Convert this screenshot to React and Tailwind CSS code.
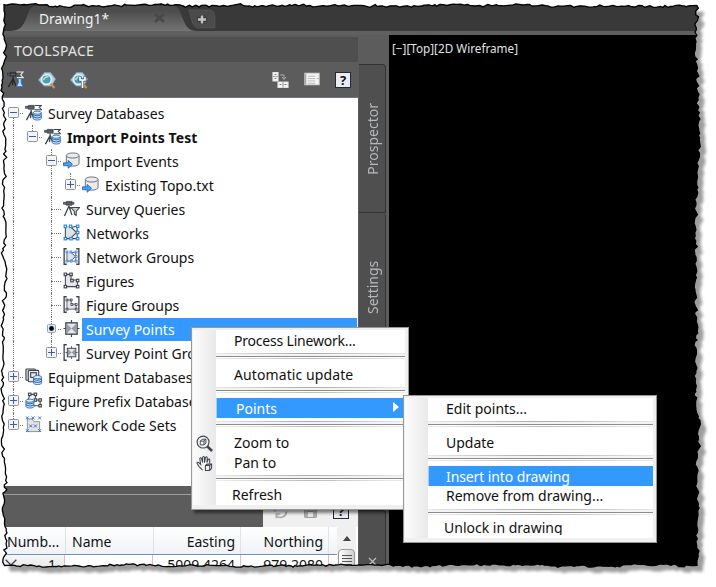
import clsx from 'clsx'

// Irregular torn outline around the whole window
function tornEdge(l, t, r, b) {
 let seed = 11
 const rand = () => {
  seed = (seed * 16807) % 2147483647
  return seed / 2147483647
 }
 const pts = []
 const side = (from, to, place) => {
  const dir = from < to ? 1 : -1
  let drift = 0
  for (let p = from; dir * (to - p) > 3; p += dir * (1.5 + rand() * 3)) {
   drift = Math.max(-1.8, Math.min(1.8, drift + (rand() - 0.5) * 2.4))
   pts.push(place(p, drift + (rand() - 0.5) * 3))
  }
 }
 side(l, r, (p, d) => [p, t + d * 0.6])
 side(t, b, (p, d) => [r + d, p])
 side(r, l, (p, d) => [p, b + d * 0.6])
 side(b, t, (p, d) => [l + d, p])
 return pts.map(([x, y]) => [x.toFixed(1), y.toFixed(1)])
}

const edge = tornEdge(4, 5.5, 697, 565.5)
const edgePoints = edge.map((p) => p.join(',')).join(' ')
const edgeClip = `polygon(${edge.map(([x, y]) => `${x}px ${y}px`).join(',')})`

const DARK = '#3f454f'
const BLUE = '#2f86e0'

function Svg({ children, className = 'w-[18px] h-[18px]', box = '0 0 18 18' }) {
 return (
  <svg viewBox={box} className={clsx('shrink-0', className)} fill="none" stroke={DARK} strokeWidth="1.2">
   {children}
  </svg>
 )
}

function Cylinder({ x, y, w, h, fill = '#e9ebee', stroke = '#666c76' }) {
 const r = w / 2
 const e = w / 5
 return (
  <g fill={fill} stroke={stroke} strokeWidth="1">
   <path d={`M${x} ${y + e}v${h - 2 * e}a${r} ${e} 0 0 0 ${w} 0v${-(h - 2 * e)}`} />
   <ellipse cx={x + r} cy={y + e} rx={r} ry={e} />
  </g>
 )
}

// Blue cylinder with white bands, the small database badge
function Database({ x, y, w = 8.5, h = 9.5 }) {
 return (
  <>
   <Cylinder x={x} y={y} w={w} h={h} fill="#e4f0fc" stroke="#2f6db8" />
   <path d={`M${x} ${y + 3.8}q${w / 2} 2.600 ${w} 0M${x} ${y + 6}q${w / 2} 2.600 ${w} 0`} stroke="#2f6db8" strokeWidth="1.100" />
  </>
 )
}

function Tripod() {
 return (
  <>
   <path d="M.5 2.500h9v2h-9zM3.500 1.500h6v4h-6z" fill="#6b7078" strokeWidth=".8" />
   <path d="M6.500 6v2.500M6.500 8 1.500 17M6.500 8l3 8M6.500 9l-.700 6" strokeWidth="1.400" />
  </>
 )
}

function Nodes({ points, color }) {
 return points.map(([x, y]) => (
  <rect key={`${x}-${y}`} x={x - 1.3} y={y - 1.3} width="2.6" height="2.6" fill="#fff" stroke={color} strokeWidth="1.200" />
 ))
}

function Network() {
 return (
  <>
   <path d="M2.500 2.500h5l7 6-7 7h-5z" fill="#dfe3e8" stroke="none" />
   <path d="M2.500 2.500v13h12.500v-13M8 3l6.500 6L8 15M9.500 3.500 15 2.500" strokeWidth="1.100" />
   <Nodes color={BLUE} points={[[2.5, 2.5], [8, 2.5], [15.5, 2.5], [15.5, 9], [15.5, 15.5], [8.5, 15.5], [2.5, 15.5]]} />
  </>
 )
}

function Figure({ color = DARK }) {
 return (
  <>
   <path d="M2.500 2.500h6v6h7v7h-13z" fill="#e4e6e9" strokeWidth="1.100" />
   <Nodes color={color} points={[[2.5, 2.5], [8.5, 2.5], [9.5, 9], [15.5, 9], [15.5, 15.5], [2.5, 15.5]]} />
  </>
 )
}

function Brackets({ children }) {
 return (
  <>
   <path d="M4 .8H1.200v16.400H4M14 .8h2.800v16.400H14" strokeWidth="1.400" />
   <g transform="translate(2.300 2.300) scale(.75)">{children}</g>
  </>
 )
}

function SurveyPoint() {
 return (
  <>
   <path d="M9 0v18M.5 9h17" strokeWidth="1.200" />
   <rect x="3" y="3" width="12" height="12" fill="#e4e6e9" strokeWidth="1.400" />
   <path d="M4 4l10 10V4L4 14z" fill="#979da5" stroke="none" />
  </>
 )
}

const icons = {
 survey: (
  <>
   <Tripod />
   <path d="M10 1.500h7.500l-2.500 2 2.500 2.500H10" strokeWidth="1.100" />
   <Database x={8.7} y={7.5} />
  </>
 ),
 event: (
  <>
   <Cylinder x={3.5} y={1} w={13.5} h={14} />
   <path d="M.5 11.500h5V9l4.500 4-4.500 4.200v-2.700h-5z" fill="#4da3ee" stroke="#1b62ad" strokeWidth=".9" />
  </>
 ),
 query: (
  <>
   <path d="M.5 2.500h11v2H.5zM3.500 1.500h6v4h-6z" fill="#6b7078" strokeWidth=".8" />
   <path d="M6.500 6 1.500 17M6.500 7l3 9M6.500 8.500h2" strokeWidth="1.400" />
   <path d="M8.500 8h9l-3.500 4v4.500l-2-1.500v-3z" fill="#c9ccd1" strokeWidth="1.100" />
  </>
 ),
 network: <Network />,
 networkGroup: <Brackets><Network /></Brackets>,
 figure: <Figure />,
 figureGroup: <Brackets><Figure /></Brackets>,
 point: <SurveyPoint />,
 pointGroup: <Brackets><SurveyPoint /></Brackets>,
 equipment: (
  <>
   <rect x="1" y="1" width="10" height="12" rx="1" fill="#dcdee2" />
   <rect x="3.500" y="2.500" width="11" height="12" rx="1" fill="#e9ebee" />
   <rect x="6" y="5" width="6" height="5" />
   <Database x={9} y={8} />
  </>
 ),
 prefix: (
  <>
   <path d="M4.500 2.500H11v6h5v6H9M5 3 3.500 8" strokeWidth="1.100" />
   <Nodes color={DARK} points={[[5, 2.5], [11, 2.5], [11, 8.5], [16, 8.5], [16, 14.5]]} />
   <Database x={1} y={7.5} />
  </>
 ),
 linework: (
  <>
   <path d="M2.500 3h5l2 3h6v10.500h-13z" fill="#dfe3e8" stroke="#8b9097" strokeWidth="1" />
   <path d="m1 .5 3 3m0-3-3 3M7 .5l3 3m0-3-3 3m7-3 3 3m0-3-3 3M4.500 9l3 3m0-3-3 3m5-3 3 3m0-3-3 3M1 14l3 3m0-3-3 3m13-3 3 3m0-3-3 3" stroke="#2a72bd" strokeWidth="1" />
  </>
 ),
}

// guides: columns on the left that carry a dotted line through the row
const tree = [
 { text: 'Survey Databases', level: 0, icon: 'survey', toggle: '-', down: true },
 { text: 'Import Points Test', level: 1, icon: 'survey', toggle: '-', up: true, guides: [0], bold: true },
 { text: 'Import Events', level: 2, icon: 'event', toggle: '-', up: true, down: true, guides: [0] },
 { text: 'Existing Topo.txt', level: 3, icon: 'event', toggle: '+', up: true, guides: [0, 2] },
 { text: 'Survey Queries', level: 2, icon: 'query', up: true, down: true, guides: [0] },
 { text: 'Networks', level: 2, icon: 'network', up: true, down: true, guides: [0] },
 { text: 'Network Groups', level: 2, icon: 'networkGroup', up: true, down: true, guides: [0] },
 { text: 'Figures', level: 2, icon: 'figure', up: true, down: true, guides: [0] },
 { text: 'Figure Groups', level: 2, icon: 'figureGroup', up: true, down: true, guides: [0] },
 { text: 'Survey Points', level: 2, icon: 'point', toggle: 'dot', up: true, down: true, guides: [0], selected: true },
 { text: 'Survey Point Groups', level: 2, icon: 'pointGroup', toggle: '+', up: true, guides: [0] },
 { text: 'Equipment Databases', level: 0, icon: 'equipment', toggle: '+', up: true, down: true },
 { text: 'Figure Prefix Databases', level: 0, icon: 'prefix', toggle: '+', up: true, down: true },
 { text: 'Linework Code Sets', level: 0, icon: 'linework', toggle: '+', up: true },
]

function Toggle({ kind }) {
 if (kind === 'dot') {
  return (
   <svg viewBox="0 0 9 9" className="w-[9px] h-[9px] shrink-0">
    <rect x=".5" y=".5" width="8" height="8" rx="1" fill="#e3edf6" stroke="#88a8c8" />
    <circle cx="4.500" cy="4.500" r="2.400" fill="#000" />
   </svg>
  )
 }
 return (
  <svg viewBox="0 0 11 11" className="w-[11px] h-[11px] shrink-0">
   <rect x=".5" y=".5" width="10" height="10" rx="1" fill="#f3f4f5" stroke="#929292" />
   <path d="M2 5.500h7" stroke="#3c5ba9" />
   {kind === '+' && <path d="M5.500 2v7" stroke="#3c5ba9" />}
  </svg>
 )
}

function TreeRow({ item }) {
 const line = 'w-px border-l border-dotted border-[#777]'
 return (
  <div className="flex h-6 items-center">
   {Array.from({ length: item.level }, (_, i) => (
    <div key={i} className="w-[19px] h-6 pl-[9px] shrink-0">
     {item.guides.includes(i) && <div className={clsx(line, 'h-6')} />}
    </div>
   ))}
   <div className="w-[19px] h-6 shrink-0 flex flex-col items-center -mt-px">
    <div className={clsx('w-px flex-1', item.up && line)} />
    {item.toggle && <Toggle kind={item.toggle} />}
    <div className={clsx('w-px flex-1', item.down && line)} />
   </div>
   <div className={clsx('h-px border-t border-dotted border-[#777] shrink-0', item.toggle ? 'w-[3px] -ml-[3px]' : 'w-[9px] -ml-[9px]')} />
   <Svg className="w-[17px] h-[17px] ml-[2px] -mt-px">{icons[item.icon]}</Svg>
   <div
    className={clsx(
     'ml-[2px] pl-1 h-[23px] leading-[23px] flex-1 mr-px mt-px',
     item.bold && 'font-bold tracking-[0.1px]',
     item.selected && 'bg-[#3399ff] text-white',
    )}
   >
    {item.text}
   </div>
  </div>
 )
}

function Separator({ className }) {
 return (
  <div className={clsx('ml-6 mr-[3px] shrink-0', className)}>
   <div className="h-px bg-gradient-to-r from-[#e8e8e8] via-[#aaa] to-[#e8e8e8]" />
   <div className="h-[2px] bg-[#f4f4f4]" />
   <div className="h-px bg-[#8c8c8c]" />
   <div className="h-px" />
   <div className="h-px bg-gradient-to-r from-[#eee] via-[#bbb] to-[#eee]" />
  </div>
 )
}

function MenuItem({ text, icon, active, arrow, indent = 'pl-[18px]', className }) {
 return (
  <div className="flex h-5 shrink-0 leading-5">
   <div className="w-6 flex items-center justify-center shrink-0">{icon}</div>
   <div
    className={clsx(
     'flex-1 flex items-center justify-between mr-[3px]',
     indent,
     active && 'bg-[#3399ff] text-white border-l border-[#9fcfff]',
     className,
    )}
   >
    <span>{text}</span>
    {arrow && (
     <svg viewBox="0 0 6 10" className="w-[6px] h-[10px] mr-[6px] mb-1">
      <path d="M0 0l6 5-6 5z" fill="#fff" />
     </svg>
    )}
   </div>
  </div>
 )
}

function Menu({ className, children }) {
 return (
  <div className={clsx('absolute flex flex-col border border-[#979797] bg-[#f0f0f0] text-[#111]', className)}>
   <div className="flex-1 flex flex-col ml-px mt-px mb-1 mr-[3px] bg-[linear-gradient(90deg,#fcfcfc_0,#e9e9e9_23px,#fff_23px)]">
    <div className="flex flex-col flex-1 -ml-px -mr-[3px]">{children}</div>
   </div>
  </div>
 )
}

function HelpIcon() {
 return <div className="size-4 border border-[#222a3a] bg-[#e9edf2] text-[#111] text-[13px] leading-[14px] font-bold text-center">?</div>
}

function TabStrip() {
 return (
  <div className="h-[31px] shrink-0 bg-[#393939] flex">
   <svg viewBox="0 0 220 31" className="w-[220px] h-[31px]">
    <defs>
     <linearGradient id="tab" x1="0" y1="0" x2="0" y2="1">
      <stop offset="0.200" stopColor="#4c4c4c" />
      <stop offset="1" stopColor="#747474" />
     </linearGradient>
    </defs>
    <path d="M10 31c10 0 13-5 16-12 3-8 4-13 10-13h137c6 0 7 6 10 13 3 8 6 12 14 12z" fill="url(#tab)" />
    <path d="M189 10h20q5 0 6 6v12h-17c-5 0-7-9-9-18z" fill="#4b4b4b" stroke="#5c5c5c" strokeWidth=".6" />
    <path d="M202 15v9M197.500 19.500h9" stroke="#333" strokeWidth="4.500" />
    <path d="M202 15.500v8M198 19.500h8" stroke="#c4c4c4" strokeWidth="2.500" />
    <path d="m155 14 9 8m0-8-9 8" stroke="#484848" strokeWidth="2.500" />
    <text x="39" y="24" fill="#f2f2f2" fontSize="14.500" textLength="70" lengthAdjust="spacingAndGlyphs">Drawing1*</text>
   </svg>
  </div>
 )
}

function Toolbar() {
 return (
  <div className="h-9 flex items-center justify-between pl-[7px] pr-[7px] border-b border-[#737380]">
   <div className="flex gap-[14px]">
    <Svg className="w-[17px] h-[17px]">
     <g stroke="#24282e"><Tripod /></g>
     <path d="M10 1h7l-2.500 3L17 7h-6.500" stroke="#e4e4e4" fill="#555" />
     <path d="M12 8h3v4.500l2 4h-7l2-4z" fill="#b8dcfc" stroke="#3279c4" strokeWidth="1" />
    </Svg>
    {[false, true].map((wrench, i) => (
     <Svg key={i} className="w-[18px] h-[18px]">
      <path d="m.5 9 6-7.500h6l5 6.500-4 7H6z" fill="#b9cfe6" stroke="#7f9dbb" strokeWidth=".8" />
      <circle cx="8.500" cy="8.500" r="4.800" fill="#4b9fa8" stroke="#e6f2ff" strokeWidth="1.400" />
      <path d="M5.500 9q2-4 5-3" stroke="#a8ecc0" strokeWidth="1.600" />
      <path d="m12.500 12.500 4 4.500" stroke="#d4914d" strokeWidth="2" />
      {wrench && (
       <>
        <path d="M10 5.500v3.500h5V5.500M12.500 9v8" stroke="#40597a" strokeWidth="3.200" />
        <path d="M10 6v3h5V6M12.500 9v8" stroke="#fff" strokeWidth="1.700" />
       </>
      )}
     </Svg>
    ))}
   </div>
   <div className="flex items-center gap-[14px]">
    <Svg>
     <path d="M2 1.500h5v8.500H2z" fill="#fafafa" stroke="#e2e2e2" />
     <path d="M7 11h10v5.500H7zM12 11v5.500" fill="#fafafa" stroke="#e2e2e2" />
     <path d="M2 5.500h5M12 11v5.500" stroke="#888" strokeWidth=".8" />
     <path d="M3.500 3.500h2M3.500 7.500h2M8.500 13.500h2M13.500 13.500h2" stroke="#777" strokeWidth="1" />
     <path d="M9 4h4v4m-2-2 2 2.500L15 6" stroke="#aaa" strokeWidth="1" />
    </Svg>
    <Svg className="w-[18px] h-[17px]">
     <path d="M1.500 2.500h15v12h-15z" fill="#f4f4f4" stroke="#d5d5d5" />
     <path d="M4.500 5.500h8M4.500 8h8M4.500 10.500h8M4.500 13h8M14 8h3" stroke="#aaa" strokeWidth=".8" />
     <path d="M2 3v11" stroke="#aaa" strokeWidth="2" />
    </Svg>
    <HelpIcon />
   </div>
  </div>
 )
}

function PointTable() {
 const head = 'shrink-0 border-r border-[#dde3ea]'
 const cell = 'shrink-0 border-r border-[#f5b5b5]'
 return (
  <div className="flex h-[50px] bg-white text-[#111]">
   <div className="w-[337px] shrink-0">
    <div className="flex h-[28px] leading-[30px] border-b border-[#6f93b5] bg-gradient-to-b from-white to-[#eff2f6]">
     <div className={clsx(head, 'w-[66px] pl-[7px]')}>Numb...</div>
     <div className={clsx(head, 'w-[88px] pl-[6px]')}>Name</div>
     <div className={clsx(head, 'w-[87px] pr-[5px] text-right')}>Easting</div>
     <div className={clsx(head, 'w-[88px] pr-[5px] text-right')}>Northing</div>
    </div>
    <div className="flex h-[22px] leading-[20px]">
     <div className={clsx(cell, 'w-[65px] flex justify-between pl-[5px] pr-2 bg-gradient-to-b from-[#f7f7f7] to-[#ddd]')}>
      <Svg className="w-[12px] h-[12px] mt-1"><path d="m1 1 16 16M17 1 1 17" strokeWidth="2" /></Svg>
      <span>1</span>
     </div>
     <div className={clsx(cell, 'w-[88px]')} />
     <div className={clsx(cell, 'w-[88px] pr-[5px] text-right')}>5009.4264</div>
     <div className={clsx(cell, 'w-[88px] pr-[5px] text-right')}>979.2080</div>
    </div>
   </div>
   <div className="w-[19px] bg-[#f0f0f0] flex flex-col items-center">
    <svg viewBox="0 0 18 22" className="w-[18px] h-[22px]"><path d="m5 14 4-5 4 5z" fill="#444" /></svg>
    <div className="w-[17px] h-7 rounded-sm border border-[#999] bg-gradient-to-r from-white to-[#d0d0d0] flex flex-col items-center gap-[2px] pt-[5px]">
     {[0, 1, 2, 3].map((i) => <div key={i} className="w-[10px] h-px bg-[#555]" />)}
    </div>
   </div>
  </div>
 )
}

function SideTabs() {
 const label = '[writing-mode:vertical-rl] rotate-180 text-[#b5b8bc] text-[14px] leading-[27px]'
 return (
  <div className="w-[31px] pt-[29px] pl-px bg-[#5c5c5c] flex flex-col">
   <div className="w-[27px] h-[149px] rounded-tr border border-l-0 border-[#333] bg-[#4f4f4f] flex items-center justify-center">
    <span className={label}>Prospector</span>
   </div>
   <div className="w-[27px] h-[297px] rounded-tr border border-l-0 border-t-0 border-[#333] bg-[#4f4f4f] pt-[46px] flex justify-center">
    <span className={clsx(label, 'h-[55px]')}>Settings</span>
   </div>
   <div className="w-[27px] h-[70px] rounded-tr border border-l-0 border-[#333] bg-[#4f4f4f] pt-[46px] flex justify-center">
    <svg viewBox="0 0 9 9" className="w-[9px] h-[9px]"><path d="m1 1 7 7M8 1 1 8" stroke="#bbb" strokeWidth="1.300" /></svg>
   </div>
  </div>
 )
}

function Window() {
 return (
  <div className="w-[716px] h-[577px] flex flex-col bg-[#5c5c5c] overflow-hidden" style={{ clipPath: edgeClip }}>
   <TabStrip />
   <div className="h-1 bg-[#606060] shrink-0" />
   <div className="flex flex-1">
    <div className="w-[358px] pt-[2px] flex flex-col">
     <div className="h-[25px] pl-[14px] leading-[27px] bg-[#4f4f4f] text-[#e4e4e4] tracking-[0.3px]">TOOLSPACE</div>
     <Toolbar />
     <div className="h-[388px] pl-1 pt-[3px] bg-white text-[#111] overflow-hidden whitespace-nowrap">
      {tree.map((item) => <TreeRow key={item.text} item={item} />)}
     </div>
     <div className="h-[9px] border-b border-[#a0a0a0] shrink-0" />
     <div className="h-8 shrink-0 flex justify-end">
      <div className="w-[95px] bg-[#f0f0f0] flex items-end gap-[15px] pl-[10px] pb-[8px]">
       <Svg className="w-[15px] h-[15px]"><path d="M2 9a7 7 0 0 1 12-5V1v5H9M16 9a7 7 0 0 1-12 5v3-5h5" stroke="#aaa" strokeWidth="2" /></Svg>
       <Svg className="w-[15px] h-[15px]"><path d="M2 2h12l2 2v12H2z" fill="#bbb" stroke="#999" /><path d="M5 9h8v7H5z" fill="#eee" stroke="#999" /></Svg>
       <HelpIcon />
      </div>
     </div>
     <PointTable />
    </div>
    <SideTabs />
    <div className="flex-1 bg-black pl-[3px] pt-[5px]">
     <svg viewBox="0 0 130 18" className="w-[130px] h-[18px]">
      <text x="0" y="13" fill="#e2e2e2" fontSize="12" textLength="126" lengthAdjust="spacingAndGlyphs">[−][Top][2D Wireframe]</text>
     </svg>
    </div>
   </div>
  </div>
 )
}

export default function App() {
 return (
  <div className="relative w-[716px] h-[587px] overflow-hidden bg-white text-[14px] font-['Noto_Sans','Open_Sans',sans-serif]">
   <svg viewBox="0 0 716 587" className="absolute inset-0 w-[716px] h-[587px]">
    <polygon points={edgePoints} fill="#000" opacity=".38" transform="translate(6 6)" className="blur-[1.5px]" />
   </svg>
   <Window />
   <svg viewBox="0 0 716 587" className="absolute inset-0 w-[716px] h-[587px]">
    <polygon points={edgePoints} fill="none" stroke="#000" strokeWidth="1.300" />
   </svg>
   <Menu className="left-[191px] top-[327px] w-[218px] h-[183px] pt-px shadow-[3px_3px_3px_rgba(0,0,0,0.5)]">
    <MenuItem text="Process Linework..." className="pt-[2px] tracking-[-0.2px]" />
    <Separator className="h-[14px] pt-[3px]" />
    <MenuItem text="Automatic update" className="pt-[2px] tracking-[0.1px]" />
    <Separator className="h-[14px] pt-[3px]" />
    <MenuItem text="Points" active arrow indent="pl-[19px]" className="pt-[2px]" />
    <Separator className="h-[15px] pt-[3px]" />
    <MenuItem
     text="Zoom to"
     icon={
      <Svg className="w-[17px] h-[17px]">
       <circle cx="7.500" cy="7.500" r="6.300" />
       <path d="m12 12 5 5" strokeWidth="2.800" />
       <path d="M4.500 6.500 6.500 4.500H10.500v4l-2 2h-4zM4.500 6.500h4v4M8.500 6.500l2-2" strokeWidth="1" />
      </Svg>
     }
    />
    <MenuItem
     text="Pan to"
     icon={
      <Svg className="w-[17px] h-[17px]">
       <path d="M7 16 3 12 1 8.500q0-1.500 2-.5l2 2L4 4q1-2 2 0l1 4V2.500q1-2 2 0V8l1-5.500q1.500-1.500 2 .5l-.500 5 1.500-3.500q1.500-1 1.500 1V9" strokeWidth="1.100" />
       <path d="m10 11 2-1.500h4.500V14l-2 2.500H10zM10 11h4.500v5M14.500 11l2-1.500" strokeWidth="1.100" />
      </Svg>
     }
    />
    <Separator className="h-[12px] pt-[2px]" />
    <MenuItem text="Refresh" indent="pl-[16px]" />
   </Menu>
   <Menu className="left-[403px] top-[395px] w-[254px] h-[148px] pt-px">
    <div className="h-px shrink-0" />
    <MenuItem text="Edit points..." />
    <Separator className="h-[14px] pt-[2px]" />
    <MenuItem text="Update" />
    <Separator className="h-[13px] pt-[2px]" />
    <MenuItem text="Insert into drawing" active indent="pl-[17px]" className="pt-[2px] tracking-[-0.1px]" />
    <MenuItem text="Remove from drawing..." />
    <Separator className="h-[12px] pt-[3px]" />
    <div className="h-[17px] overflow-hidden">
     <MenuItem text="Unlock in drawing" indent="pl-[16px]" />
    </div>
   </Menu>
  </div>
 )
}
